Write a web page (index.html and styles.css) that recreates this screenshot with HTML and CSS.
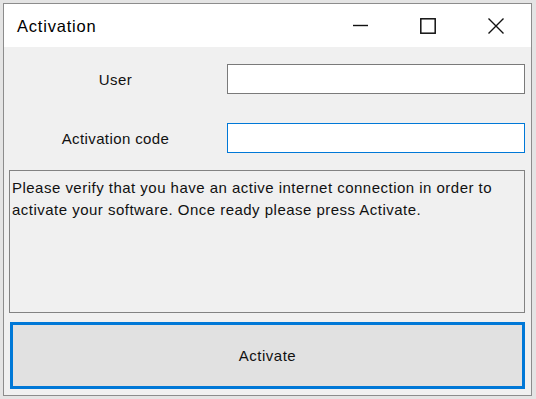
FILE: index.html
```html
<!DOCTYPE html>
<html lang="en">
<head>
  <meta charset="UTF-8" />
  <title>Activation</title>
  <link rel="stylesheet" href="styles.css">
</head>
<body>

<div class="window">

  <!-- Title bar -->
  <div class="titlebar">
    <div class="title">Activation</div>
    <div class="caption-buttons">
      <div class="cap-btn">
        <svg width="15" height="15" viewBox="0 0 15 15"><path d="M0 7.5h15" stroke="#111" stroke-width="1.4" fill="none"/></svg>
      </div>
      <div class="cap-btn">
        <svg width="16" height="16" viewBox="0 0 16 16"><rect x="0.8" y="0.8" width="14.4" height="14.4" stroke="#111" stroke-width="1.5" fill="none"/></svg>
      </div>
      <div class="cap-btn">
        <svg width="16" height="16" viewBox="0 0 16 16"><path d="M0.5 0.5L15.5 15.5M15.5 0.5L0.5 15.5" stroke="#111" stroke-width="1.4" fill="none"/></svg>
      </div>
    </div>
  </div>

  <!-- Client area -->
  <div class="client">
    <div class="form">
      <label class="label" for="user">User</label>
      <input class="textbox" id="user" type="text" />
      <label class="label" for="code">Activation code</label>
      <input class="textbox focused" id="code" type="text" />
    </div>

    <div class="message">Please verify that you have an active internet connection in order to activate your software. Once ready please press Activate.</div>

    <button class="activate">Activate</button>
  </div>

</div>

</body>
</html>
```

FILE: styles.css
```css
body {
  margin: 0;
  background: #e4e4e4;
  height: 399px;
  overflow: hidden;
  font-family: 'Liberation Sans', Arial, sans-serif;
  color: #000;
}
.window {
  margin: 3px 0 0 3px;
  width: 529px;
  height: 393px;
  box-sizing: border-box;
  border: 1px solid #8c8c8c;
  background: #f0f0f0;
  display: flex;
  flex-direction: column;
}
.titlebar {
  height: 44px;
  background: #fff;
  display: flex;
  align-items: center;
  justify-content: space-between;
}
.title {
  padding-left: 13px;
  font-size: 16.5px;
  letter-spacing: 0.8px;
  padding-top: 1px;
}
.caption-buttons {
  display: flex;
  height: 100%;
  margin-right: 1px;
}
.cap-btn {
  width: 68px;
  display: flex;
  align-items: center;
  justify-content: center;
}
.client {
  flex: 1;
  display: flex;
  flex-direction: column;
  padding: 17px 6px 6px 5px;
}
.form {
  display: grid;
  grid-template-columns: 213px 298px;
  column-gap: 5px;
  row-gap: 29px;
  align-items: center;
}
.label {
  text-align: center;
  font-size: 15px;
  letter-spacing: 0.4px;
  padding-top: 1px;
  color: #111;
}
.textbox {
  height: 30px;
  box-sizing: border-box;
  border: 1px solid #7a7a7a;
  background: #fff;
  margin: 0;
  padding: 0 4px;
  outline: none;
}
.textbox.focused {
  border-color: #0078d7;
}
.message {
  margin-top: 17px;
  height: 143px;
  box-sizing: border-box;
  border: 1px solid #828282;
  background: #f0f0f0;
  padding: 6px 2px;
  font-size: 15px;
  letter-spacing: 0.48px;
  line-height: 22px;
  color: #111;
}
.activate {
  margin: 9px 0 0 1px;
  width: 515px;
  height: 67px;
  box-sizing: border-box;
  border: 3px solid #0078d7;
  background: #e1e1e1;
  font-family: 'Liberation Sans', Arial, sans-serif;
  font-size: 15px;
  letter-spacing: 0.5px;
  color: #111;
}
```
